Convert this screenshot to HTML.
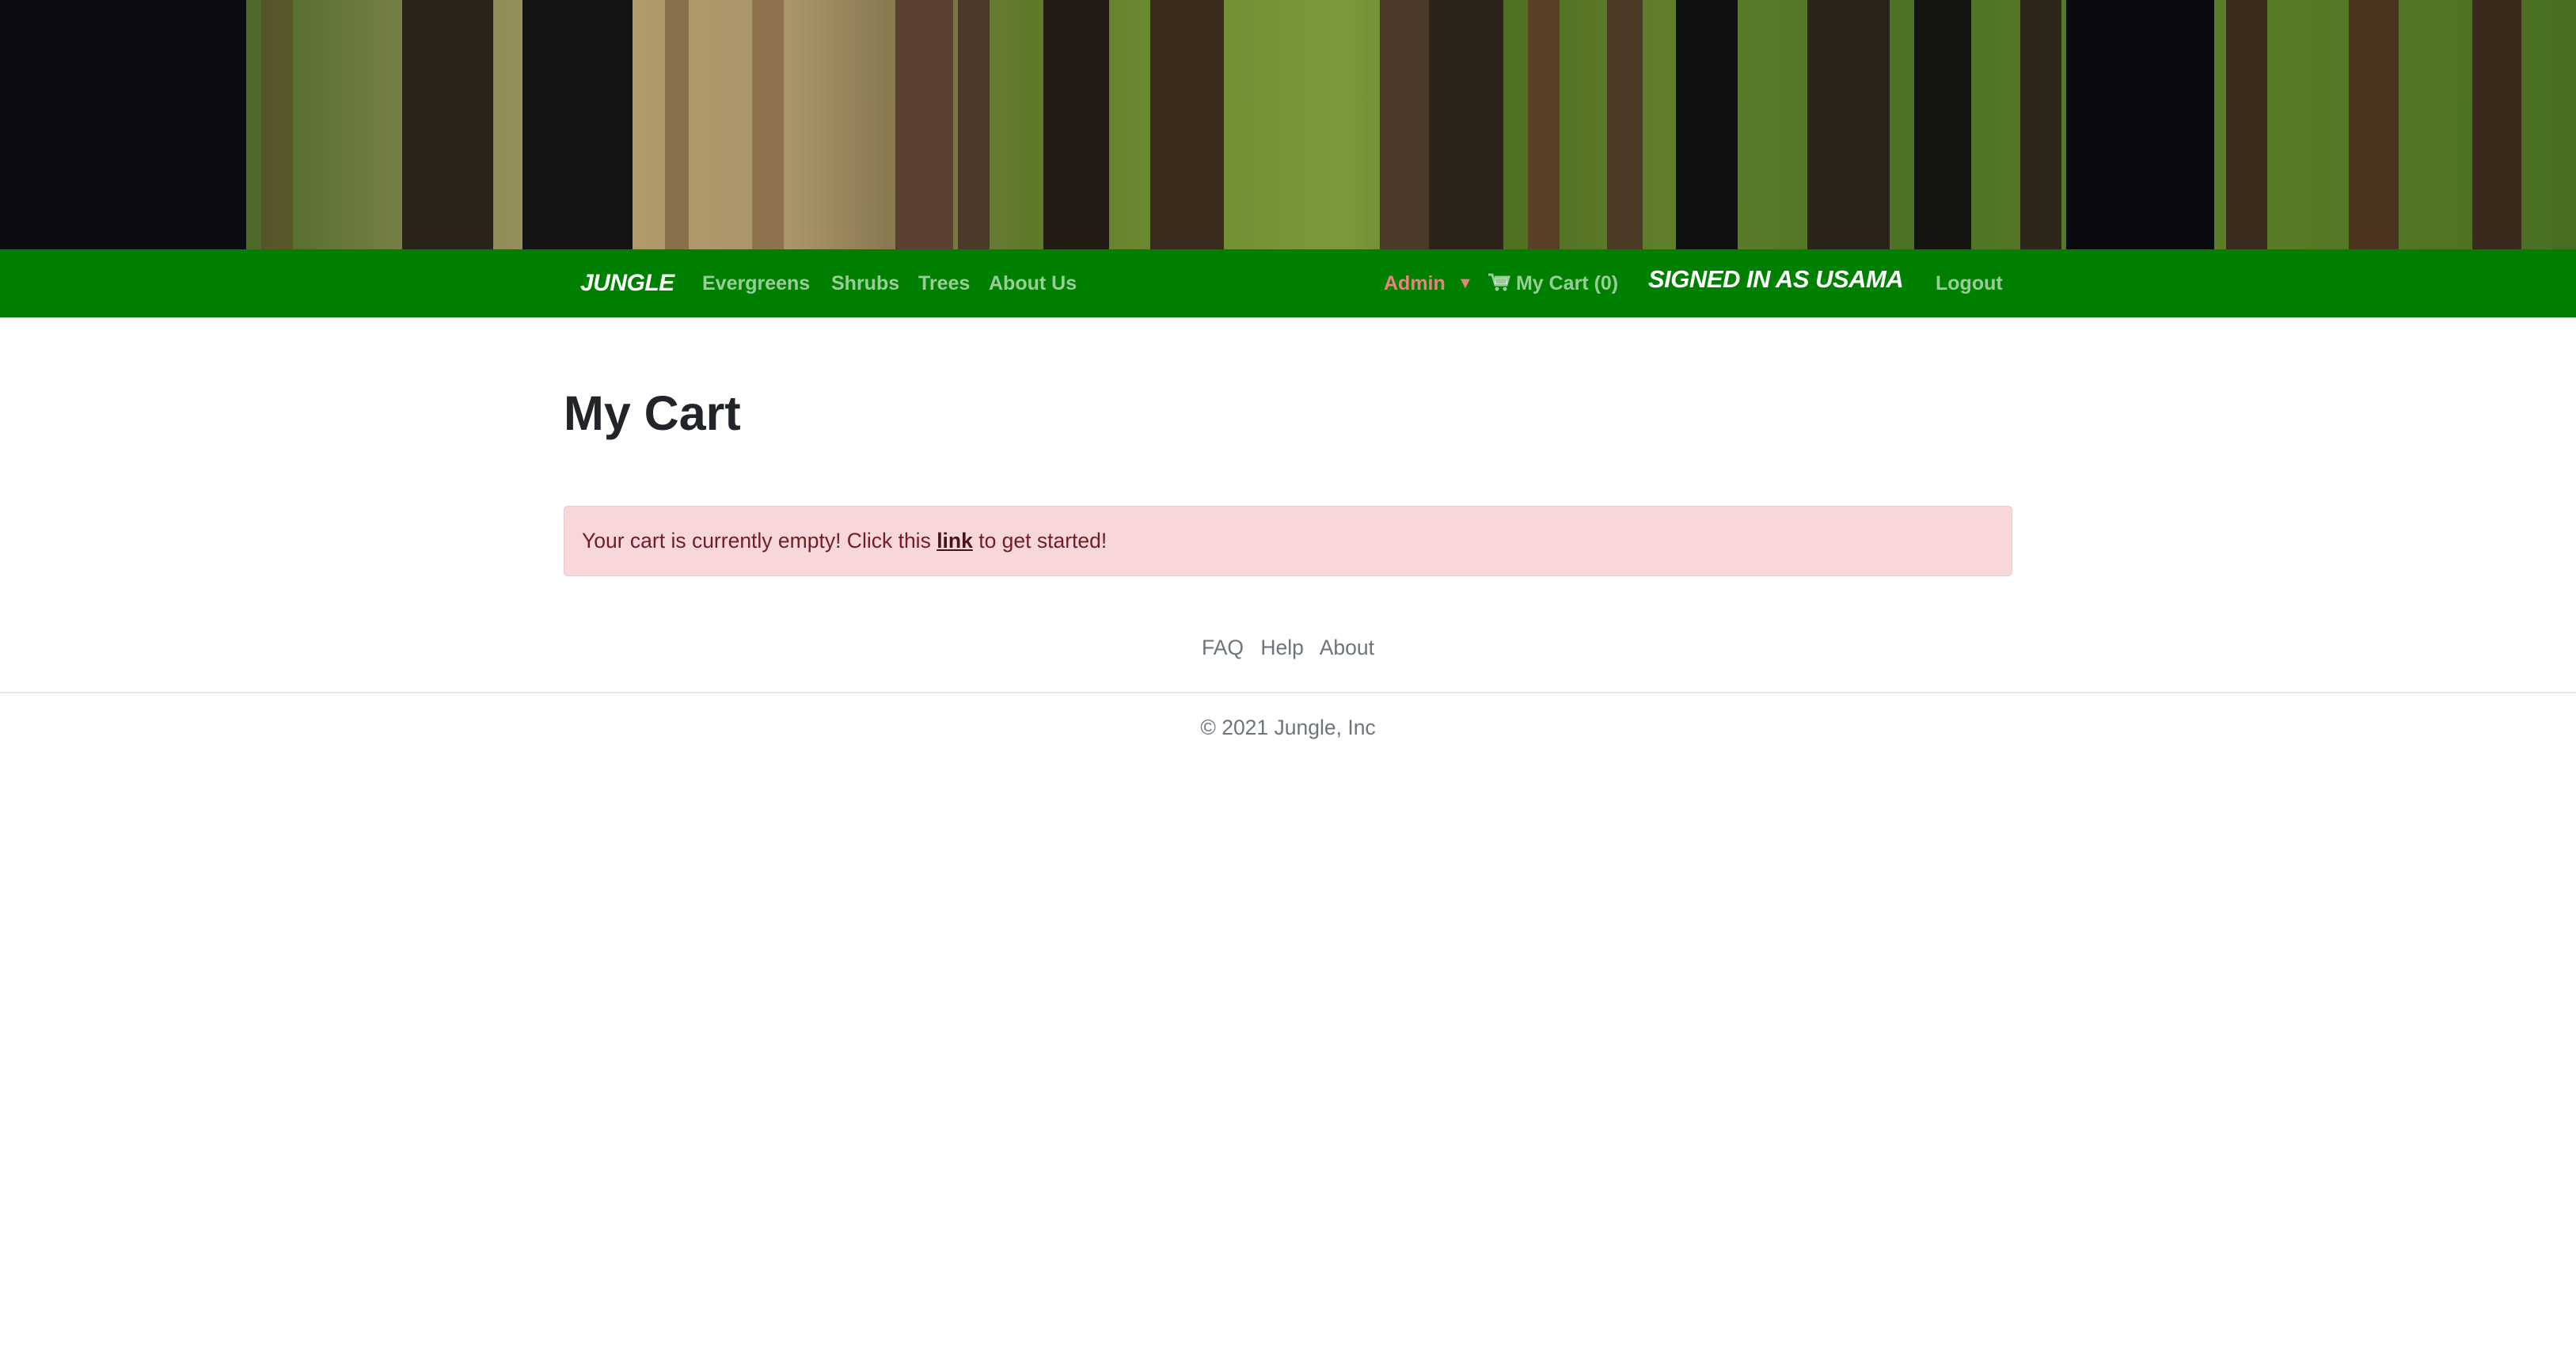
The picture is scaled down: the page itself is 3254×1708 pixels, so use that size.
<!DOCTYPE html>
<html><head><meta charset="utf-8">
<style>
html,body{margin:0;padding:0;width:3254px;height:1708px;overflow:hidden;background:#fff;font-family:"Liberation Sans",sans-serif;}
#banner{position:absolute;left:0;top:0;width:3254px;height:315px;overflow:hidden;
background:linear-gradient(90deg,#3a4a20 0px,#4f6a28 320px,#8a8a55 600px,#b09a6a 800px,#a89568 1000px,#8a7a50 1120px,#5d7a2a 1300px,#6f8e32 1500px,#7b9a3a 1700px,#4f6f22 1900px,#5f7f2a 2100px,#4d7225 2400px,#5a7d28 2800px,#4a6e22 3254px);}
#banner .t{position:absolute;top:0;height:315px;}
#nav{position:absolute;left:0;top:315px;width:3254px;height:86px;background:#008000;}
#nav span{position:absolute;top:0;line-height:86px;font-size:25px;font-weight:bold;color:rgba(255,255,255,.6);white-space:nowrap;}
#nav .b{color:#fff;font-style:italic;font-weight:900;letter-spacing:-0.5px;font-size:30px;}
h1{position:absolute;left:712px;top:482px;margin:0;font-size:61px;font-weight:600;color:#212529;line-height:80px;}
#alert{position:absolute;left:712px;top:639px;width:1828px;height:87px;background:#f8d7da;border:1px solid #f5c6cb;border-radius:5px;box-sizing:content-box;}
#alert div{position:absolute;left:22px;top:0;line-height:87px;font-size:26.5px;color:#721c24;}
#alert b{text-decoration:underline;color:#491217;}
#links{position:absolute;left:0;width:3254px;top:798px;text-align:center;font-size:26.5px;color:#6c757d;line-height:40px;word-spacing:14px;}
#hr{position:absolute;left:0;top:874px;width:3254px;height:2px;background:#e6e6e6;}
#copy{position:absolute;left:0;width:3254px;top:899px;text-align:center;font-size:26.5px;color:#6c757d;line-height:40px;}
</style></head><body>
<div id="banner">
<div class="t" style="left:0;width:311px;background:#0b0d12"></div>
<div class="t" style="left:330px;width:40px;background:rgba(90,70,40,.6)"></div>
<div class="t" style="left:508px;width:115px;background:#2a2418"></div>
<div class="t" style="left:660px;width:139px;background:#141414"></div>
<div class="t" style="left:840px;width:30px;background:rgba(120,95,60,.7)"></div>
<div class="t" style="left:950px;width:40px;background:rgba(130,100,65,.7)"></div>
<div class="t" style="left:1131px;width:73px;background:#5a4030"></div>
<div class="t" style="left:1210px;width:40px;background:#4a3828"></div>
<div class="t" style="left:1318px;width:83px;background:#231c14"></div>
<div class="t" style="left:1453px;width:93px;background:#3a2c1c"></div>
<div class="t" style="left:1743px;width:62px;background:#4a3828"></div>
<div class="t" style="left:1805px;width:94px;background:#2c2418"></div>
<div class="t" style="left:1930px;width:40px;background:#5a4028"></div>
<div class="t" style="left:2030px;width:45px;background:#4a3a26"></div>
<div class="t" style="left:2117px;width:78px;background:#0f1010"></div>
<div class="t" style="left:2283px;width:104px;background:#2a2418"></div>
<div class="t" style="left:2418px;width:72px;background:#141410"></div>
<div class="t" style="left:2552px;width:52px;background:#2e2618"></div>
<div class="t" style="left:2610px;width:187px;background:#0a0b10"></div>
<div class="t" style="left:2812px;width:52px;background:#3a2c1c"></div>
<div class="t" style="left:2967px;width:63px;background:#4a3420"></div>
<div class="t" style="left:3123px;width:62px;background:#3a2a1c"></div>
</div>
<div id="nav">
<span class="b" style="left:733px">JUNGLE</span>
<span style="left:887px">Evergreens</span>
<span style="left:1050px">Shrubs</span>
<span style="left:1160px">Trees</span>
<span style="left:1249px">About Us</span>
<span style="left:1748px;color:#f08080">Admin</span>
<span style="left:1841px;color:#f08080;font-size:20px">&#9660;</span>
<span style="left:1880px">
<svg width="28" height="24" viewBox="0 0 28 24" style="vertical-align:-3px"><path d="M0 2h5l4 13h14l3-10H8" fill="none" stroke="rgba(255,255,255,.6)" stroke-width="3"/><rect x="8" y="6" width="16" height="8" fill="rgba(255,255,255,.6)"/><circle cx="11" cy="20" r="2.5" fill="rgba(255,255,255,.6)"/><circle cx="21" cy="20" r="2.5" fill="rgba(255,255,255,.6)"/></svg> My Cart (0)</span>
<span class="b" style="left:2082px;top:-5px;font-size:31px">SIGNED IN AS USAMA</span>
<span style="left:2445px">Logout</span>
</div>
<h1>My Cart</h1>
<div id="alert"><div>Your cart is currently empty! Click this <b>link</b> to get started!</div></div>
<div id="links">FAQ Help About</div>
<div id="hr"></div>
<div id="copy">© 2021 Jungle, Inc</div>
</body></html>
